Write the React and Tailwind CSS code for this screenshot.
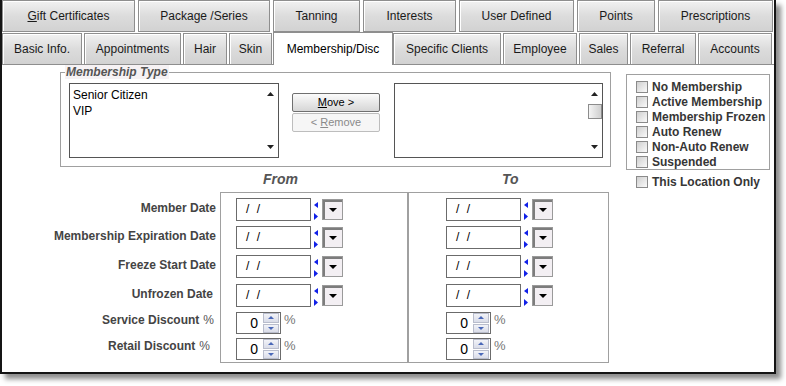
import React from 'react';

const topTabs = [
  { label: <><span className="underline">G</span>ift Certificates</>, w: 'w-[133px]' },
  { label: 'Package /Series', w: 'w-[132px]' },
  { label: 'Tanning', w: 'w-[87px]' },
  { label: 'Interests', w: 'w-[93px]' },
  { label: 'User Defined', w: 'w-[115px]' },
  { label: 'Points', w: 'w-[78px]' },
  { label: 'Prescriptions', w: 'w-[115px]' },
];

const Tab = ({ label, w, className = '' }) => (
  <div
    className={`${w} ${className} flex items-center justify-center border border-[#8e8e8e] bg-gradient-to-b from-[#f1f1f1] via-[#dcdcdc] to-[#d2d2d2] shadow-[inset_1px_1px_0_#ffffff] text-[12px] text-[#1a1a1a]`}
  >
    {label}
  </div>
);

const ScrollArrows = ({ thumb }) => (
  <div className="w-[15px] h-full flex flex-col items-center justify-between py-[8px] relative">
    <svg width="7" height="4" viewBox="0 0 7 4"><polygon points="3.5,0 7,4 0,4" fill="#222" /></svg>
    {thumb && (
      <div className="absolute top-[20px] left-[1px] w-[14px] h-[15px] border border-[#8c8c8c] bg-gradient-to-r from-[#f4f4f4] to-[#cfcfcf]" />
    )}
    <svg width="7" height="4" viewBox="0 0 7 4"><polygon points="0,0 7,0 3.5,4" fill="#222" /></svg>
  </div>
);

const ListBox = ({ items = [], thumb, w }) => (
  <div className={`${w} h-[75px] border border-[#555] bg-white flex`}>
    <div className="flex-1 pl-[3px] pt-[3px] text-[12px] leading-[16px] text-black">
      {items.map((it) => (
        <div key={it}>{it}</div>
      ))}
    </div>
    <ScrollArrows thumb={thumb} />
  </div>
);

const Check = ({ label }) => (
  <div className="h-[15px] flex items-center gap-[4px]">
    <div className="w-[12px] h-[12px] border border-[#8a8a8a] bg-gradient-to-br from-[#cfcfcf] to-[#fafafa]" />
    <span className="text-[12px] font-bold text-[#363636] leading-none">{label}</span>
  </div>
);

const DateField = () => (
  <div className="flex items-start">
    <div className="w-[75px] h-[23px] border border-[#6b6b6b] bg-white pl-[9px] text-[12px] leading-[21px] text-black tracking-[2px]">/ /</div>
    <svg className="ml-[3px] mt-[4px]" width="4" height="18" viewBox="0 0 4 18">
      <polygon points="4,0 4,6 0,3" fill="#1020e8" />
      <polygon points="0,11 0,18 4,14.5" fill="#1020e8" />
    </svg>
    <div className="ml-[4px] mt-[1px] w-[21px] h-[21px] border border-[#9a9a9a] shadow-[inset_2px_2px_0_#7c7c7c] bg-[#f3eff3] flex items-center justify-center">
      <svg width="8" height="4" viewBox="0 0 8 4"><polygon points="0,0 8,0 4,4" fill="#000" /></svg>
    </div>
  </div>
);

const SpinField = () => (
  <div className="flex items-start">
    <div className="w-[45px] h-[22px] border border-[#6b6b6b] bg-white flex items-center justify-end">
      <span className="text-[14px] text-black leading-none pr-[5px]">0</span>
      <div className="w-[16px] h-[20px] flex flex-col gap-[1px] mr-[1px]">
        <div className="flex-1 border border-[#b9bdcc] bg-gradient-to-b from-[#f2f3f8] to-[#d9dce8] flex items-center justify-center">
          <svg width="6" height="3" viewBox="0 0 6 3"><polygon points="3,0 6,3 0,3" fill="#4a68b8" /></svg>
        </div>
        <div className="flex-1 border border-[#b9bdcc] bg-gradient-to-b from-[#f2f3f8] to-[#d9dce8] flex items-center justify-center">
          <svg width="6" height="3" viewBox="0 0 6 3"><polygon points="0,0 6,0 3,3" fill="#4a68b8" /></svg>
        </div>
      </div>
    </div>
    <span className="ml-[3px] text-[13px] text-[#777] leading-[16px]">%</span>
  </div>
);

// row heights shared by labels and both panels
const rows = [
  { label: 'Member Date', h: 'h-[28px]', pr: '', kind: 'date' },
  { label: 'Membership Expiration Date', h: 'h-[29px]', pr: '', kind: 'date' },
  { label: 'Freeze Start Date', h: 'h-[29px]', pr: '', kind: 'date' },
  { label: 'Unfrozen Date', h: 'h-[28px]', pr: 'pr-[3px]', kind: 'date' },
  { label: 'Service Discount', h: 'h-[26px]', pr: 'pr-[2px]', kind: 'spin' },
  { label: 'Retail Discount', h: 'h-[22px]', pr: 'pr-[6px]', kind: 'spin' },
];

const Panel = ({ w, pl }) => (
  <div className={`${w} h-[171px] border border-[#a0a0a0] ${pl} pt-[5px] flex flex-col`}>
    {rows.map((r) => (
      <div key={r.label} className={r.h}>
        {r.kind === 'date' ? <DateField /> : <SpinField />}
      </div>
    ))}
  </div>
);

export default function App() {
  return (
    <div className="w-[786px] h-[386px] bg-white font-['Liberation_Sans',Arial,sans-serif]">
      <div className="w-[776px] h-[374px] border-x-2 border-b-2 border-[#151515] bg-white shadow-[5px_5px_5px_rgba(0,0,0,0.45)] flex flex-col">
        {/* Tabs */}
        <div className="flex gap-[3px] h-[32px]">
          {topTabs.map((t, i) => (
            <Tab key={i} label={t.label} w={t.w} />
          ))}
        </div>
        <div className="flex items-end h-[32px]">
          <Tab label="Basic Info." w="w-[80px]" className="h-[31px] border-b-0" />
          <Tab label="Appointments" w="w-[97px]" className="h-[31px] border-b-0 ml-[2px]" />
          <Tab label="Hair" w="w-[44px]" className="h-[31px] border-b-0 ml-[2px]" />
          <Tab label="Skin" w="w-[43px]" className="h-[31px] border-b-0 ml-[2px]" />
          <div className="w-[120px] h-[33px] ml-[1px] mb-[-1px] relative z-10 bg-white border border-b-0 border-[#8e8e8e] flex items-center justify-center text-[12px] text-black">
            Membership/Disc
          </div>
          <Tab label="Specific Clients" w="w-[108px]" className="h-[31px] border-b-0" />
          <Tab label="Employee" w="w-[74px]" className="h-[31px] border-b-0 ml-[2px]" />
          <Tab label="Sales" w="w-[49px]" className="h-[31px] border-b-0 ml-[2px]" />
          <Tab label="Referral" w="w-[66px]" className="h-[31px] border-b-0 ml-[2px]" />
          <Tab label="Accounts" w="w-[74px]" className="h-[31px] border-b-0 ml-[2px]" />
        </div>

        {/* Content */}
        <div className="flex-1 border-t border-[#8e8e8e] flex">
          <div className="w-[614px] flex flex-col">
            {/* Membership type group */}
            <div className="relative ml-[58px] mt-[7px] w-[551px] h-[95px] border border-[#a0a0a0] flex items-start pl-[8px] pt-[10px]">
              <div className="absolute left-[4px] top-[-8px] px-[1px] bg-[#f6f2f4] text-[12px] leading-[14px] font-bold italic text-[#555]">
                Membership Type
              </div>
              <ListBox w="w-[210px]" items={['Senior Citizen', 'VIP']} />
              <div className="ml-[13px] mt-[10px] flex flex-col gap-[1px]">
                <div className="w-[88px] h-[19px] border border-[#6f6f6f] rounded-[2px] bg-gradient-to-b from-[#fbfbfb] to-[#d6d6d6] flex items-center justify-center text-[11px] text-black">
                  <span><span className="underline">M</span>ove &gt;</span>
                </div>
                <div className="w-[88px] h-[19px] border border-[#bdbdbd] rounded-[2px] bg-[#f6f6f6] flex items-center justify-center text-[11px] text-[#8a8a8a]">
                  <span>&lt; <span className="underline">R</span>emove</span>
                </div>
              </div>
              <div className="ml-[14px]">
                <ListBox w="w-[209px]" thumb />
              </div>
            </div>

            {/* From / To headers */}
            <div className="flex mt-[4px] h-[16px] text-[14px] leading-[16px] font-bold italic text-[#555]">
              <span className="ml-[261px]">From</span>
              <span className="ml-[204px]">To</span>
            </div>

            {/* Date grid */}
            <div className="flex mt-[5px]">
              <div className="w-[214px] pt-[4px] flex flex-col">
                {rows.map((r) => (
                  <div key={r.label} className={`${r.h} ${r.pr}`}>
                    <div className={`${r.kind === 'date' ? 'h-[23px]' : 'h-[20px]'} flex items-center justify-end text-[12px] font-bold text-[#444]`}>
                      {r.label}
                      {r.kind === 'spin' && <span className="font-normal ml-[4px] text-[#555]">%</span>}
                    </div>
                  </div>
                ))}
              </div>
              <div className="ml-[4px] flex">
                <Panel w="w-[188px]" pl="pl-[15px]" />
                <Panel w="w-[201px]" pl="pl-[37px]" />
              </div>
            </div>
          </div>

          {/* Status checkboxes */}
          <div className="ml-[10px] mt-[9px] flex flex-col">
            <div className="w-[144px] h-[96px] border border-[#a0a0a0] pl-[9px] pt-[4px]">
              <Check label="No Membership" />
              <Check label="Active Membership" />
              <Check label="Membership Frozen" />
              <Check label="Auto Renew" />
              <Check label="Non-Auto Renew" />
              <Check label="Suspended" />
            </div>
            <div className="pl-[10px] mt-[4px]">
              <Check label="This Location Only" />
            </div>
          </div>
        </div>
      </div>
    </div>
  );
}
